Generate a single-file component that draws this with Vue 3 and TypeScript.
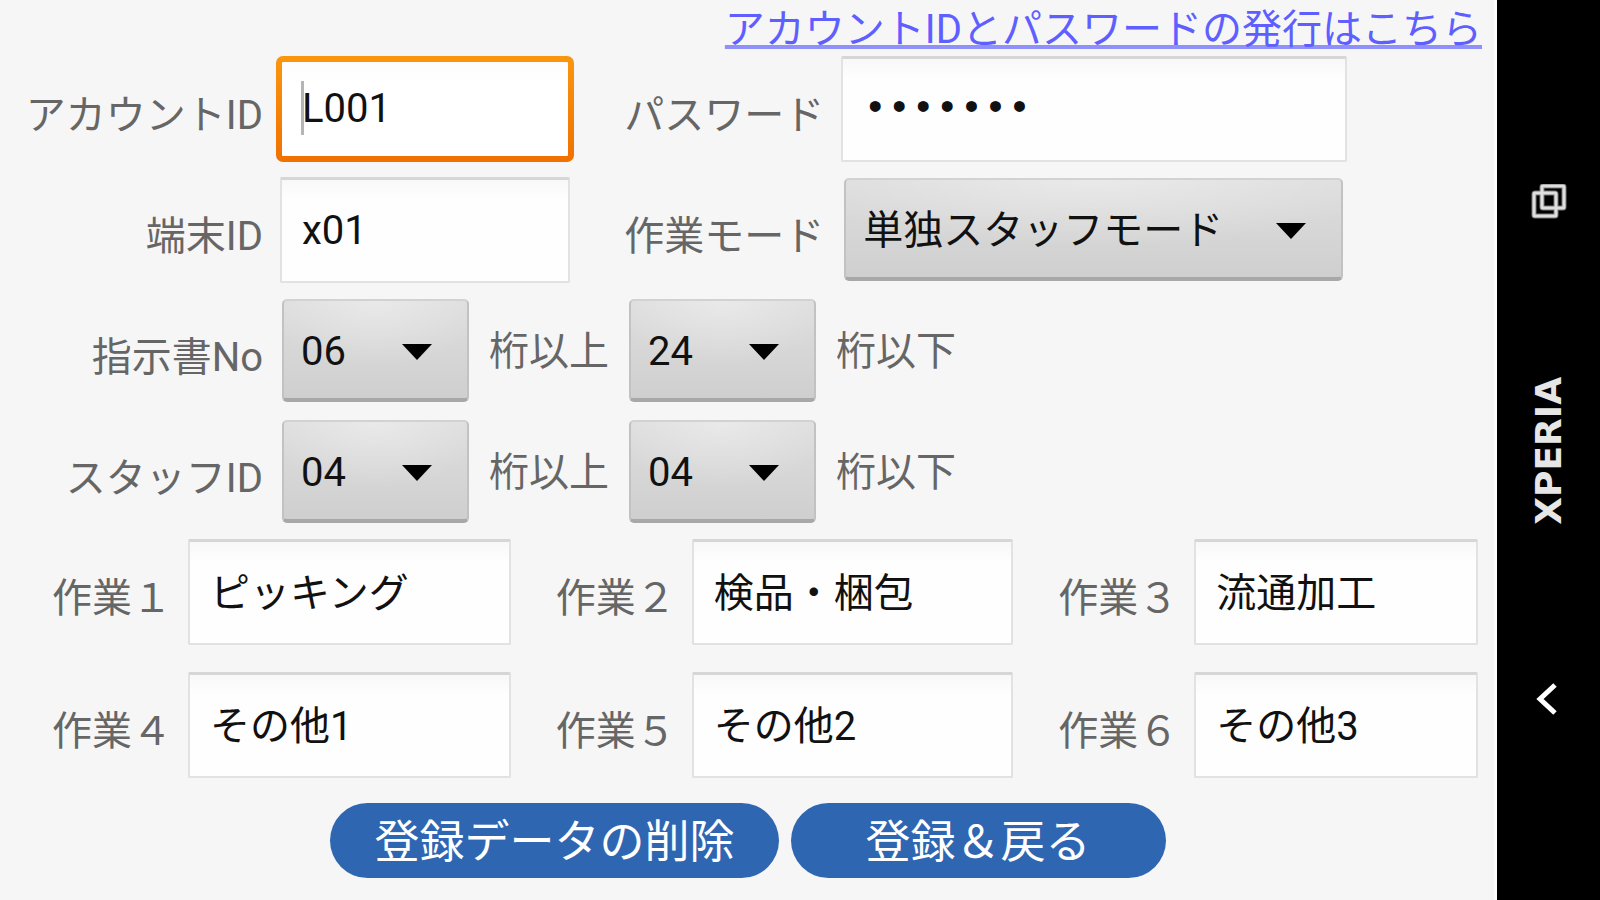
<script setup lang="ts">
import { ref } from 'vue'

interface DigitRule {
  id: string
  label: string
  min: string
  max: string
}

interface Task {
  id: string
  label: string
  name: string
}

const accountId = ref('L001')
const password = ref('abcdefg')
const terminalId = ref('x01')
const workMode = ref('単独スタッフモード')
const modes: string[] = ['単独スタッフモード', '複数スタッフモード']
const digits: string[] = Array.from({ length: 24 }, (_, i) => String(i + 1).padStart(2, '0'))

const rules = ref<DigitRule[]>([
  { id: 'order', label: '指示書No', min: '06', max: '24' },
  { id: 'staff', label: 'スタッフID', min: '04', max: '04' },
])

const tasks = ref<Task[]>([
  { id: 'task1', label: '作業１', name: 'ピッキング' },
  { id: 'task2', label: '作業２', name: '検品・梱包' },
  { id: 'task3', label: '作業３', name: '流通加工' },
  { id: 'task4', label: '作業４', name: 'その他1' },
  { id: 'task5', label: '作業５', name: 'その他2' },
  { id: 'task6', label: '作業６', name: 'その他3' },
])
</script>

<template>
  <div class="device">
    <main class="screen">
      <p class="issue"><a href="#issue">アカウントIDとパスワードの発行はこちら</a></p>
      <form @submit.prevent>
        <div class="pair">
          <label class="label" for="account">アカウントID</label>
          <div class="focus-box">
            <input id="account" v-model="accountId" class="field focused" type="text" />
            <span class="caret"></span>
          </div>
          <label class="label" for="password">パスワード</label>
          <input id="password" v-model="password" class="field password" type="password" />
        </div>
        <div class="pair">
          <label class="label" for="terminal">端末ID</label>
          <input id="terminal" v-model="terminalId" class="field" type="text" />
          <label class="label" for="mode">作業モード</label>
          <div class="spinner wide">
            <select id="mode" v-model="workMode">
              <option v-for="m in modes" :key="m">{{ m }}</option>
            </select>
            <svg class="arrow" viewBox="0 0 30 16" aria-hidden="true"><path d="M0 0H30L15 16Z" /></svg>
          </div>
        </div>
        <div v-for="rule in rules" :key="rule.id" class="range">
          <label class="label" :for="rule.id + '-min'">{{ rule.label }}</label>
          <div class="spinner">
            <select :id="rule.id + '-min'" v-model="rule.min">
              <option v-for="d in digits" :key="d">{{ d }}</option>
            </select>
            <svg class="arrow" viewBox="0 0 30 16" aria-hidden="true"><path d="M0 0H30L15 16Z" /></svg>
          </div>
          <label class="unit" :for="rule.id + '-min'">桁以上</label>
          <div class="spinner">
            <select :id="rule.id + '-max'" v-model="rule.max">
              <option v-for="d in digits" :key="d">{{ d }}</option>
            </select>
            <svg class="arrow" viewBox="0 0 30 16" aria-hidden="true"><path d="M0 0H30L15 16Z" /></svg>
          </div>
          <label class="unit" :for="rule.id + '-max'">桁以下</label>
        </div>
        <div class="tasks">
          <div v-for="task in tasks" :key="task.id" class="task">
            <label class="label" :for="task.id">{{ task.label }}</label>
            <input :id="task.id" v-model="task.name" class="field" type="text" />
          </div>
        </div>
        <div class="actions">
          <button class="pill delete" type="button">登録データの削除</button>
          <button class="pill save" type="submit">登録＆戻る</button>
        </div>
      </form>
    </main>
    <nav class="bezel">
      <button class="key" type="button" aria-label="履歴">
        <svg width="36" height="36" viewBox="0 0 36 36" fill="none">
          <rect x="11" y="2" width="22" height="22" rx="1" stroke="#777" stroke-width="5" />
          <rect x="3" y="9" width="22" height="23" rx="1" stroke="#777" stroke-width="5" />
          <rect x="11" y="2" width="22" height="22" rx="1" stroke="#dedede" stroke-width="3" />
          <rect x="3" y="9" width="22" height="23" rx="1" stroke="#dedede" stroke-width="3" />
        </svg>
      </button>
      <span class="brand">XPERIA</span>
      <button class="key" type="button" aria-label="戻る">
        <svg width="36" height="36" viewBox="0 0 36 36" fill="none">
          <path d="M24 4L9 18L24 32" stroke="#fff" stroke-width="5" />
        </svg>
      </button>
    </nav>
  </div>
</template>

<style>
body {
  margin: 0;
}
</style>

<style scoped>
.device {
  display: flex;
  min-height: 100vh;
  background: #f6f6f6;
  color: #666;
  font: 40px/56px Roboto, 'Noto Sans CJK JP', sans-serif;
  white-space: nowrap;
}
.device * {
  box-sizing: border-box;
}
.screen {
  flex: 1;
  min-width: 0;
}
.issue {
  height: 48px;
  margin: 0;
  padding: 2px 12px 0 0;
  text-align: right;
}
.issue a {
  color: #5f5fff;
  text-decoration-thickness: 4px;
  text-underline-offset: 2px;
  text-decoration-skip-ink: none;
  text-decoration-color: #9090fa;
}
.pair {
  display: grid;
  grid-template-columns: 263px 291fr 237px 507fr 130fr;
  column-gap: 17px;
  align-items: center;
  height: 121px;
}
.range {
  display: flex;
  align-items: center;
  gap: 20px;
  height: 121px;
}
.label {
  padding-top: 14px;
  text-align: right;
}
.range .label {
  width: 263px;
  margin-right: -1px;
}
.unit {
  padding-top: 3px;
}
.field {
  width: 100%;
  min-width: 0;
  height: 106px;
  padding: 0 20px 0 20px;
  border: 2px solid #e2e2e2;
  border-top: 3px solid #d6d6d6;
  border-radius: 2px;
  outline: none;
  background: linear-gradient(#f8f8f8, #fefefe 20px);
  color: #111;
  font: inherit;
}
.focus-box {
  position: relative;
  margin: 0 -4px;
}
.focused {
  display: block;
  border: 6px solid transparent;
  border-radius: 7px;
  background:
    linear-gradient(#fcfcfc, #fff 24px) padding-box,
    linear-gradient(#fb960f, #f07000) border-box;
}
.caret {
  position: absolute;
  top: 25px;
  left: 25px;
  width: 3px;
  height: 54px;
  background: #b5b5b5;
}
.password {
  font-family: 'Liberation Mono', monospace;
}
.spinner {
  position: relative;
  width: 187px;
}
.spinner.wide {
  width: auto;
  margin: 0 4px 0 3px;
}
.spinner select {
  display: block;
  width: 100%;
  height: 103px;
  padding: 4px 60px 0 17px;
  border: 2px solid #c2c2c2;
  border-top-color: #d2d2d2;
  border-bottom: 4px solid #a8a8a8;
  border-radius: 5px;
  appearance: none;
  background:
    radial-gradient(ellipse 60% 70% at 50% 0, rgb(255 255 255 / 35%), transparent),
    linear-gradient(#dedede, #cfcfcf);
  color: #111;
  font: inherit;
}
.arrow {
  position: absolute;
  top: 45px;
  right: 37px;
  width: 30px;
  height: 16px;
  fill: #000;
  pointer-events: none;
}
.tasks {
  display: grid;
  grid-template-columns: 459fr 458fr 420fr;
  gap: 27px 45px;
  padding: 7px 16px 0 52px;
}
.task {
  display: flex;
  align-items: center;
  gap: 16px;
}
.task .field {
  padding-bottom: 5px;
}
.actions {
  display: flex;
  justify-content: center;
  gap: 12px;
  padding: 25px 0 0 2px;
}
.pill {
  height: 75px;
  padding: 5px 44px 0;
  border: 0;
  border-radius: 38px;
  background: #2e66b2;
  color: #fff;
  font: inherit;
  font-size: 45px;
}
.pill.save {
  padding: 5px 75px 0;
}
.bezel {
  display: flex;
  flex-direction: column;
  align-items: center;
  justify-content: space-between;
  width: 106px;
  padding: 181px 0 180px;
  border-left: 3px solid #fff;
  background: #000;
}
.key {
  display: flex;
  align-items: center;
  justify-content: center;
  width: 60px;
  height: 42px;
  padding: 0;
  border: 0;
  background: none;
}
.brand {
  writing-mode: vertical-rl;
  rotate: 180deg;
  color: #e6e6e6;
  font: bold 36px/56px 'DejaVu Sans', sans-serif;
}
</style>
